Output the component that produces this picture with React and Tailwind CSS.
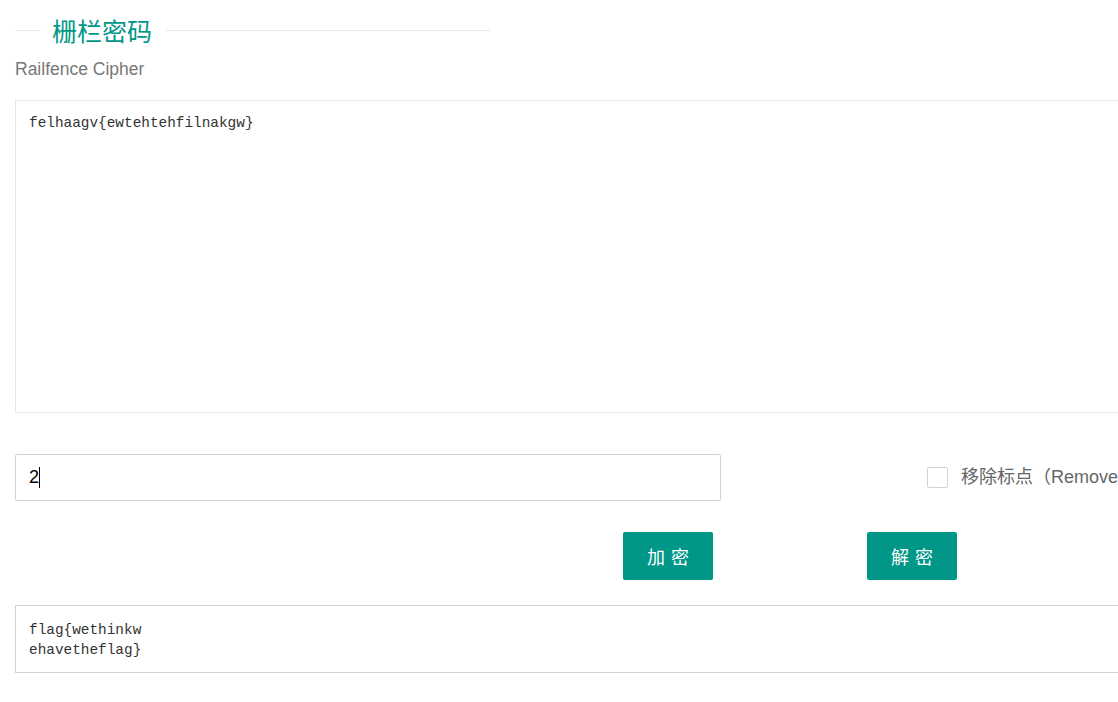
import { useState } from "react";

// Rail fence cipher page — layui-like look
export default function App() {
  const [text, setText] = useState("felhaagv{ewtehtehfilnakgw}");
  const [key, setKey] = useState("2");
  const [removePunct, setRemovePunct] = useState(false);
  const output = "flag{wethinkw\nehavetheflag}";

  return (
    <div className="w-screen h-screen overflow-hidden bg-white font-['Liberation_Sans','Noto_Sans_CJK_SC',sans-serif]">
      <div className="w-[1400px] pl-[15px] pt-[16px]">
        {/* Title — fieldset legend style */}
        <div className="flex items-center w-[475px] h-[28px]">
          <div className="w-[26px] h-px bg-[#e6e6e6]" />
          <h2 className="pl-[11px] pr-[14px] text-[25px] leading-[28px] text-[#009688] font-['Noto_Sans_CJK_SC',sans-serif]">
            栅栏密码
          </h2>
          <div className="flex-1 h-px bg-[#e6e6e6]" />
        </div>

        <p className="mt-[15px] text-[17.5px] leading-[20px] text-[#777]">Railfence Cipher</p>

        <textarea
          value={text}
          onChange={(e) => setText(e.target.value)}
          className="block mt-[21px] w-[1200px] h-[313px] resize-none border border-[#e6e6e6] px-[13px] pt-[12px] pb-[10px] text-[14.4px] leading-[20px] text-[#333] outline-none font-['Liberation_Mono','Noto_Sans_CJK_SC',monospace]"
        />

        <div className="flex items-center mt-[41px]">
          <div className="relative">
            <input
              value={key}
              onChange={(e) => setKey(e.target.value)}
              className="w-[706px] h-[47px] border border-[#d2d2d2] rounded-[2px] px-[13px] text-[18px] text-black outline-none caret-transparent"
            />
            {/* text caret */}
            <span className="absolute left-[24px] top-[13px] w-px h-[21px] bg-black" />
          </div>
          <label className="flex items-center ml-[206px] cursor-pointer select-none">
            <span
              onClick={() => setRemovePunct((v) => !v)}
              className={
                "w-[21px] h-[21px] border rounded-[2px] " +
                (removePunct ? "bg-[#009688] border-[#009688]" : "border-[#d2d2d2] bg-white")
              }
            />
            <span className="ml-[13px] text-[18px] text-[#666] whitespace-nowrap font-['Liberation_Sans','Noto_Sans_CJK_SC',sans-serif]">
              移除标点（Remove punctuation）
            </span>
          </label>
        </div>

        <div className="flex mt-[31px] pl-[608px] gap-[154px]">
          <button className="w-[90px] h-[48px] rounded-[2px] bg-[#009688] text-white text-[18px] tracking-[6px] pl-[6px] font-['Noto_Sans_CJK_SC',sans-serif]">
            加密
          </button>
          <button className="w-[90px] h-[48px] rounded-[2px] bg-[#009688] text-white text-[18px] tracking-[6px] pl-[6px] font-['Noto_Sans_CJK_SC',sans-serif]">
            解密
          </button>
        </div>

        <div className="mt-[25px] w-[1200px] h-[68px] border border-[#d2d2d2] px-[13px] pt-[14px] text-[14.4px] leading-[20px] text-[#333] whitespace-pre font-['Liberation_Mono','Noto_Sans_CJK_SC',monospace]">
          {output}
        </div>
      </div>
    </div>
  );
}
